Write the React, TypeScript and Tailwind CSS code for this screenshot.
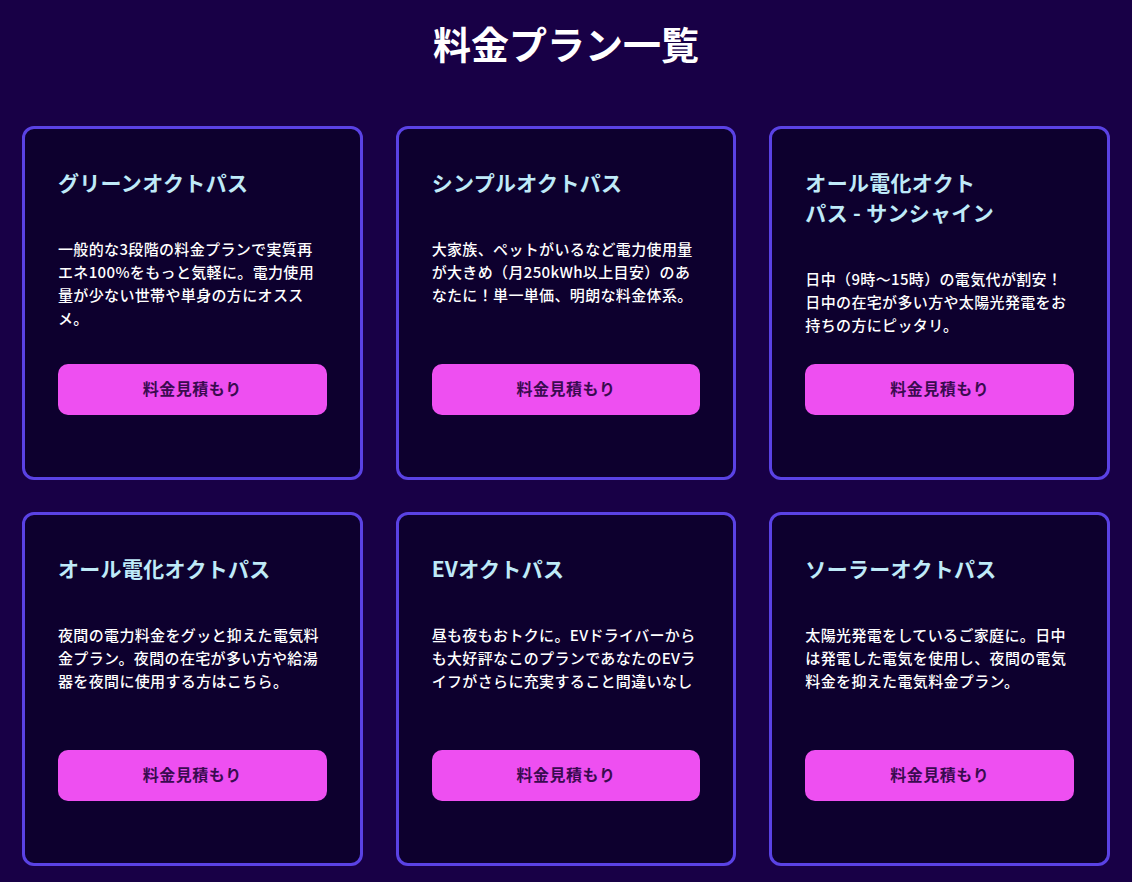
import React from "react";

interface Plan {
  title: React.ReactNode;
  desc: React.ReactNode;
}

const plans: Plan[] = [
  {
    title: "グリーンオクトパス",
    desc: "一般的な3段階の料金プランで実質再エネ100%をもっと気軽に。電力使用量が少ない世帯や単身の方にオススメ。",
  },
  {
    title: "シンプルオクトパス",
    desc: "大家族、ペットがいるなど電力使用量が大きめ（月250kWh以上目安）のあなたに！単一単価、明朗な料金体系。",
  },
  {
    title: (
      <>
        オール電化オクト
        <br />
        パス - サンシャイン
      </>
    ),
    desc: (
      <>
        日中（9時〜15時）の電気代が割安！
        <br />
        日中の在宅が多い方や太陽光発電をお持ちの方にピッタリ。
      </>
    ),
  },
  {
    title: "オール電化オクトパス",
    desc: "夜間の電力料金をグッと抑えた電気料金プラン。夜間の在宅が多い方や給湯器を夜間に使用する方はこちら。",
  },
  {
    title: "EVオクトパス",
    desc: "昼も夜もおトクに。EVドライバーからも大好評なこのプランであなたのEVライフがさらに充実すること間違いなし",
  },
  {
    title: "ソーラーオクトパス",
    desc: "太陽光発電をしているご家庭に。日中は発電した電気を使用し、夜間の電気料金を抑えた電気料金プラン。",
  },
];

const PlanCard: React.FC<{ plan: Plan }> = ({ plan }) => {
  return (
    <div className="flex flex-col h-[354px] bg-[#0d002e] border-[3px] border-[#5a42e4] rounded-[12px] px-[33px] pt-[38px] pb-[62px]">
      <h3 className="text-[21px] leading-[30px] font-bold text-[#bfeaf8] tracking-[0.3px]">
        {plan.title}
      </h3>
      <p className="mt-[40px] text-[15px] leading-[23px] font-medium text-white tracking-[0.35px]">
        {plan.desc}
      </p>
      <button className="mt-auto h-[51px] w-full rounded-[10px] bg-[#ee4ff1] text-[#3a0b50] text-[16px] leading-[22px] font-bold tracking-[0.5px] pb-[3px]">
        料金見積もり
      </button>
    </div>
  );
};

export default function App() {
  return (
    <div
      className="min-h-screen bg-[#180046] pt-[14px] pb-[40px]"
      style={{ fontFamily: '"Noto Sans CJK JP", "Noto Sans", sans-serif' }}
    >
      <h2 className="text-center text-white text-[38px] leading-[57px] font-bold">
        料金プラン一覧
      </h2>
      <div className="mt-[55px] grid grid-cols-3 gap-x-[33px] gap-y-[32px] px-[22px]">
        {plans.map((plan, i) => (
          <PlanCard key={i} plan={plan} />
        ))}
      </div>
    </div>
  );
}
